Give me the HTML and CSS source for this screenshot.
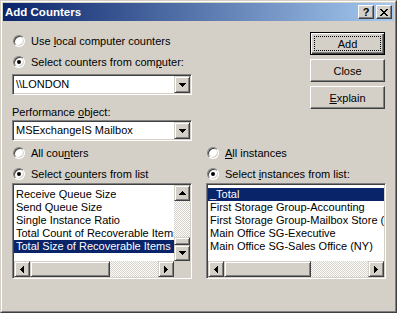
FILE: index.html
```html
<!DOCTYPE html>
<html lang="en">
<head>
    <meta charset="UTF-8">
    <title>Add Counters</title>
    <link rel="stylesheet" href="styles.css">
</head>
<body>

<div class="window">
    <div class="frame">
        <div class="titlebar">
            <span class="title">Add Counters</span>
            <div class="caption-buttons">
                <span class="cap-btn help">?</span>
                <span class="cap-btn close">
                    <svg width="8" height="7" viewBox="0 0 8 7"><path d="M0 0h2v1h1v1h2V1h1V0h2v1H7v1H6v1H5v1h1v1h1v1h1v1H6V6H5V5H3v1H2v1H0V6h1V5h1V4h1V3H2V2H1V1H0z" fill="#000"/></svg>
                </span>
            </div>
        </div>

        <div class="dialog">
            <!-- left column: computer, object, counters -->
            <div class="col left">
                <div class="radio first"><span class="circle"></span><span>Use <u>l</u>ocal computer counters</span></div>
                <div class="radio second"><span class="circle checked"></span><span>Select counters from com<u>p</u>uter:</span></div>
                <div class="combo first-combo">
                    <span class="combo-text">\\LONDON</span>
                    <span class="drop-btn"><svg width="7" height="4" viewBox="0 0 7 4"><path d="M0 0h7v1H0zM1 1h5v1H1zM2 2h3v1H2zM3 3h1v1H3z"/></svg></span>
                </div>
                <div class="label">Performance <u>o</u>bject:</div>
                <div class="combo">
                    <span class="combo-text">MSExchangeIS Mailbox</span>
                    <span class="drop-btn"><svg width="7" height="4" viewBox="0 0 7 4"><path d="M0 0h7v1H0zM1 1h5v1H1zM2 2h3v1H2zM3 3h1v1H3z"/></svg></span>
                </div>
                <div class="radio third"><span class="circle"></span><span>All cou<u>n</u>ters</span></div>
                <div class="radio fourth"><span class="circle checked"></span><span>Select <u>c</u>ounters from list</span></div>

                <div class="listbox with-vscroll">
                    <div class="items">
                        <div class="item">Receive Queue Size</div>
                        <div class="item">Send Queue Size</div>
                        <div class="item">Single Instance Ratio</div>
                        <div class="item">Total Count of Recoverable Items</div>
                        <div class="item selected">Total Size of Recoverable Items</div>
                    </div>
                    <div class="vscroll">
                        <span class="sb-btn"><svg width="7" height="4" viewBox="0 0 7 4"><path d="M3 0h1v1H3zM2 1h3v1H2zM1 2h5v1H1zM0 3h7v1H0z"/></svg></span>
                        <span class="track">
                            <span class="vthumb"></span>
                        </span>
                        <span class="sb-btn"><svg width="7" height="4" viewBox="0 0 7 4"><path d="M0 0h7v1H0zM1 1h5v1H1zM2 2h3v1H2zM3 3h1v1H3z"/></svg></span>
                    </div>
                    <div class="hscroll">
                        <span class="sb-btn"><svg width="4" height="7" viewBox="0 0 4 7"><path d="M3 0h1v7H3zM2 1h1v5H2zM1 2h1v3H1zM0 3h1v1H0z"/></svg></span>
                        <span class="track">
                            <span class="hthumb" style="width:80px"></span>
                        </span>
                        <span class="sb-btn"><svg width="4" height="7" viewBox="0 0 4 7"><path d="M0 0h1v7H0zM1 1h1v5H1zM2 2h1v3H2zM3 3h1v1H3z"/></svg></span>
                    </div>
                    <div class="corner"></div>
                </div>
            </div>

            <!-- right column: buttons and instances -->
            <div class="col right">
                <div class="buttons">
                    <button class="btn default"><span class="focus">Add</span></button>
                    <button class="btn">Close</button>
                    <button class="btn"><u>E</u>xplain</button>
                </div>
                <div class="radio third"><span class="circle"></span><span><u>A</u>ll instances</span></div>
                <div class="radio fourth"><span class="circle checked"></span><span>Select <u>i</u>nstances from list:</span></div>

                <div class="listbox">
                    <div class="items">
                        <div class="item selected">_Total</div>
                        <div class="item">First Storage Group-Accounting</div>
                        <div class="item">First Storage Group-Mailbox Store (LONDON)</div>
                        <div class="item">Main Office SG-Executive</div>
                        <div class="item">Main Office SG-Sales Office (NY)</div>
                    </div>
                    <div class="hscroll">
                        <span class="sb-btn"><svg width="4" height="7" viewBox="0 0 4 7"><path d="M3 0h1v7H3zM2 1h1v5H2zM1 2h1v3H1zM0 3h1v1H0z"/></svg></span>
                        <span class="track">
                            <span class="hthumb" style="width:87px"></span>
                        </span>
                        <span class="sb-btn"><svg width="4" height="7" viewBox="0 0 4 7"><path d="M0 0h1v7H0zM1 1h1v5H1zM2 2h1v3H2zM3 3h1v1H3z"/></svg></span>
                    </div>
                </div>
            </div>
        </div>
    </div>
</div>

</body>
</html>
```

FILE: styles.css
```css
body {
    margin: 0;
    font-family: "Liberation Sans", Arial, sans-serif;
    font-size: 11px;
    color: #000;
    background-color: #d4d0c8;
}
.window {
    width: 397px;
    height: 313px;
    box-sizing: border-box;
    border: 1px solid;
    border-color: #d4d0c8 #404040 #404040 #d4d0c8;
    background-color: #d4d0c8;
}
.frame {
    height: 100%;
    box-sizing: border-box;
    border: 1px solid;
    border-color: #fff #808080 #808080 #fff;
    padding: 1px;
}
.titlebar {
    height: 18px;
    display: flex;
    align-items: center;
    justify-content: space-between;
    padding: 0 2px;
    background: linear-gradient(to right, #0a246a, #a6caf0);
}
.title {
    color: #fff;
    font-weight: bold;
    font-size: 11.5px;
}
.caption-buttons {
    display: flex;
    gap: 2px;
}
.cap-btn {
    width: 16px;
    height: 14px;
    box-sizing: border-box;
    display: flex;
    align-items: center;
    justify-content: center;
    background-color: #d4d0c8;
    border: 1px solid;
    border-color: #fff #404040 #404040 #fff;
    box-shadow: inset -1px -1px #808080;
}
.help {
    font-weight: bold;
    font-size: 11px;
    line-height: 12px;
}

/* dialog body */
.dialog {
    display: flex;
    gap: 14px;
    padding-left: 9px;
}
.col {
    width: 180px;
    display: flex;
    flex-direction: column;
}
.col.left {
    padding-top: 13px;
}
.col.right {
    padding-top: 11px;
}

.radio {
    height: 14px;
    display: flex;
    align-items: center;
    gap: 6px;
    padding-left: 1px;
    white-space: nowrap;
}
.radio.second {
    margin-top: 7px;
}
.radio.third {
    margin-top: 5px;
}
.radio.fourth {
    margin-top: 7px;
}
.circle {
    width: 12px;
    height: 12px;
    flex: none;
    box-sizing: border-box;
    border-radius: 50%;
    border: 1px solid;
    border-color: #808080 #fff #fff #808080;
    box-shadow: inset 1px 1px #404040, inset -1px -1px #d4d0c8;
    background-color: #fff;
    display: flex;
    align-items: center;
    justify-content: center;
}
.circle.checked::after {
    content: "";
    width: 4px;
    height: 4px;
    border-radius: 50%;
    background-color: #000;
}

.label {
    height: 14px;
    line-height: 14px;
    margin-top: 10px;
}

/* combo boxes */
.combo {
    height: 21px;
    box-sizing: border-box;
    display: flex;
    align-items: stretch;
    background-color: #fff;
    border: 1px solid;
    border-color: #808080 #fff #fff #808080;
    box-shadow: inset 1px 1px #404040, inset -1px -1px #d4d0c8;
    padding: 1px;
    margin-top: 1px;
}
.combo.first-combo {
    margin-top: 5px;
}
.combo-text {
    flex: 1;
    padding-left: 2px;
    line-height: 17px;
}
.drop-btn {
    width: 16px;
    box-sizing: border-box;
    display: flex;
    align-items: center;
    justify-content: center;
    background-color: #d4d0c8;
    border: 1px solid;
    border-color: #d4d0c8 #404040 #404040 #d4d0c8;
    box-shadow: inset 1px 1px #fff, inset -1px -1px #808080;
}

/* list boxes */
.listbox {
    height: 96px;
    margin-top: 2px;
    box-sizing: border-box;
    border: 1px solid;
    border-color: #808080 #fff #fff #808080;
    box-shadow: inset 1px 1px #404040, inset -1px -1px #d4d0c8;
    padding: 1px;
    background-color: #fff;
    display: grid;
    grid-template-columns: 1fr;
    grid-template-rows: 1fr 16px;
}
.listbox.with-vscroll {
    grid-template-columns: 1fr 16px;
}
.items {
    overflow: hidden;
    padding-top: 3px;
}
.item {
    height: 13px;
    line-height: 13px;
    padding-left: 2px;
    white-space: nowrap;
}
.item.selected {
    background-color: #0a246a;
    color: #fff;
}
.with-vscroll .hscroll {
    grid-column: 1;
}
.corner {
    background-color: #d4d0c8;
}

/* scroll bars */
.vscroll, .hscroll {
    display: flex;
    background-color: #d4d0c8;
}
.vscroll {
    flex-direction: column;
}
.sb-btn {
    width: 16px;
    height: 16px;
    flex: none;
    box-sizing: border-box;
    display: flex;
    align-items: center;
    justify-content: center;
    background-color: #d4d0c8;
    border: 1px solid;
    border-color: #d4d0c8 #404040 #404040 #d4d0c8;
    box-shadow: inset 1px 1px #fff, inset -1px -1px #808080;
}
.track {
    flex: 1;
    display: flex;
    background-color: #fff;
    background-image: conic-gradient(#d4d0c8 25%, #fff 0 50%, #d4d0c8 0 75%, #fff 0);
    background-size: 2px 2px;
}
.vscroll .track {
    flex-direction: column;
    justify-content: flex-end;
}
.vthumb, .hthumb {
    box-sizing: border-box;
    background-color: #d4d0c8;
    border: 1px solid;
    border-color: #d4d0c8 #404040 #404040 #d4d0c8;
    box-shadow: inset 1px 1px #fff, inset -1px -1px #808080;
}
.vthumb {
    height: 8px;
}

/* push buttons */
.buttons {
    display: flex;
    flex-direction: column;
    align-items: flex-end;
    gap: 4px;
    margin-bottom: 32px;
}
.btn {
    width: 75px;
    height: 23px;
    box-sizing: border-box;
    font-family: "Liberation Sans", Arial, sans-serif;
    font-size: 11px;
    color: #000;
    background-color: #d4d0c8;
    border: 1px solid;
    border-color: #fff #404040 #404040 #fff;
    box-shadow: inset -1px -1px #808080;
    padding: 0;
    margin-right: 1px;
}
.btn.default {
    border-color: #000;
    box-shadow: inset 1px 1px #fff, inset -1px -1px #404040, inset -2px -2px #808080;
    padding: 3px;
}
.focus {
    display: flex;
    align-items: center;
    justify-content: center;
    height: 100%;
    box-sizing: border-box;
    border: 1px dotted #000;
}
```
